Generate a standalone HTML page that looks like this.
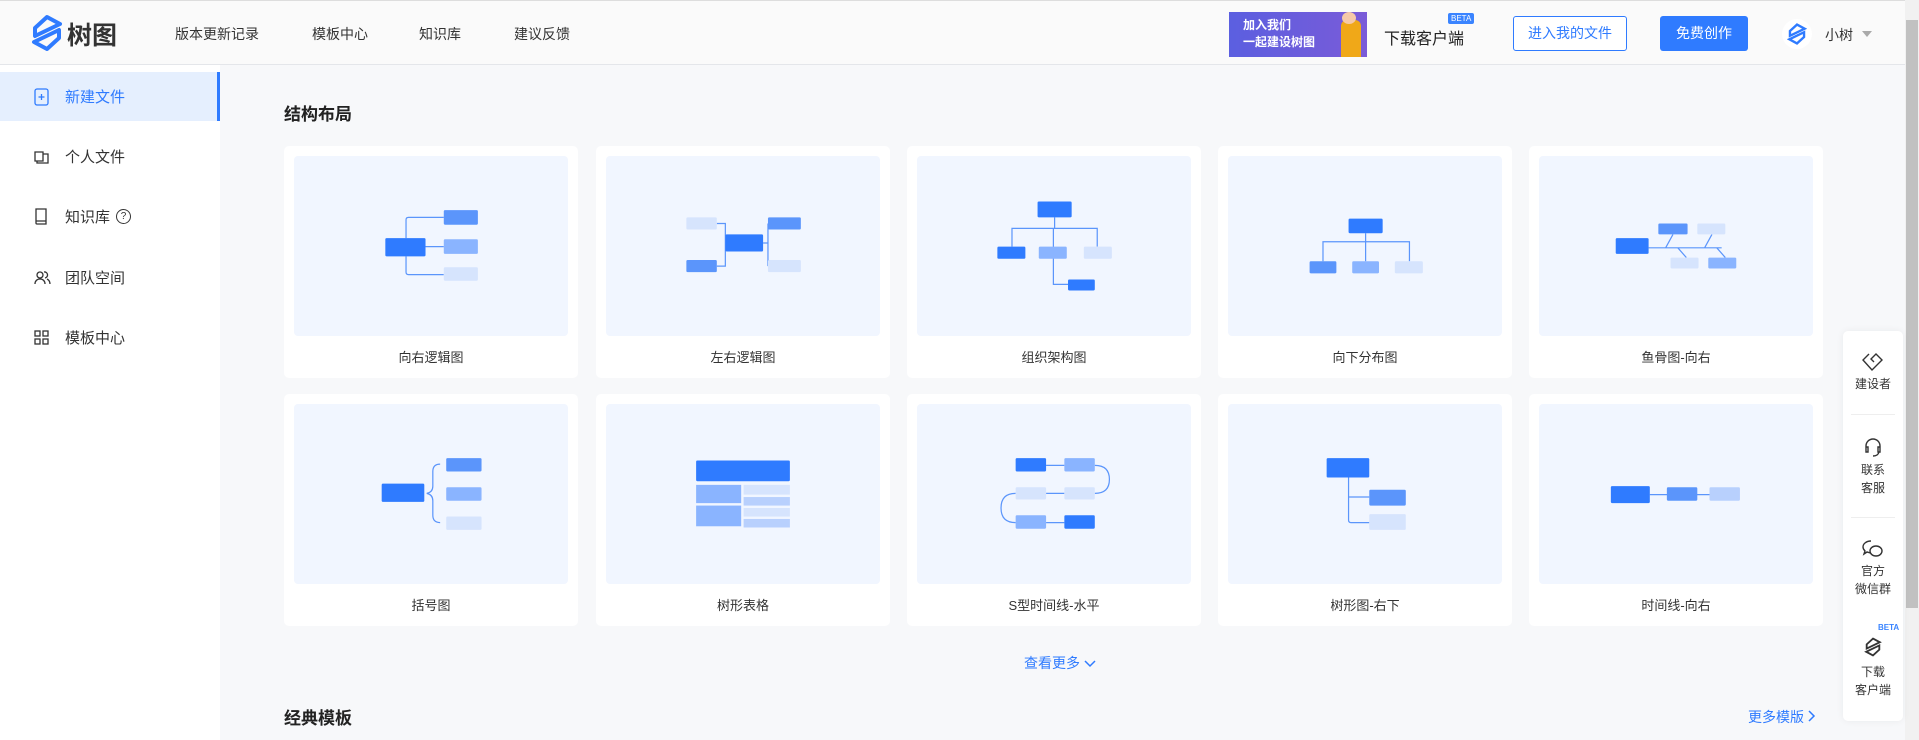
<!DOCTYPE html>
<html><head><meta charset="utf-8"><style>
*{margin:0;padding:0;box-sizing:border-box}
body{width:1919px;height:740px;overflow:hidden;background:#f7f8fa;font-family:"Liberation Sans","Noto Sans CJK SC",sans-serif;color:#333;position:relative}
.hdr{position:absolute;left:0;top:0;width:1905px;height:65px;background:#fafafa;border-bottom:1px solid #e4e6ea;border-top:1px solid #ddd}
.abs{position:absolute}
.nav{position:absolute;top:23px;font-size:14px;color:#333}
.side{position:absolute;left:0;top:65px;width:220px;height:675px;background:#fff}
.si{position:absolute;left:0;width:220px;height:49px;font-size:15px;color:#333;display:flex;align-items:center;padding-left:65px}
.si svg{position:absolute;left:34px}
.card{position:absolute;width:294px;height:232px;background:#fff;border-radius:5px}
.pv{position:absolute;left:10px;top:10px;width:274px;height:180px;background:#f1f6ff;border-radius:4px}
.pv svg{width:100%;height:100%}
.lb{position:absolute;left:0;right:0;top:201px;text-align:center;font-size:13px;color:#333}
.rp{position:absolute;left:1843px;top:331px;width:60px;height:390px;background:#fff;border-radius:5px;box-shadow:0 0 8px rgba(0,0,0,.06)}
.rt{position:absolute;left:0;width:60px;text-align:center;font-size:12px;color:#333;line-height:18px}
</style></head><body>
<div class="hdr">
 <svg class="abs" style="left:30px;top:13px" width="34" height="38" viewBox="0 0 34 38"><g fill="none" stroke="#2f7bff" stroke-width="4" stroke-linejoin="round"><path d="M17 3 L30 10 L5 22 L5 14 Z"/><path d="M17 35 L4 28 L29 16 L29 24 Z"/></g></svg>
 <div class="abs" style="left:67px;top:15px;font-size:25px;font-weight:bold;color:#333">树图</div>
 <div class="nav" style="left:175px">版本更新记录</div>
 <div class="nav" style="left:312px">模板中心</div>
 <div class="nav" style="left:419px">知识库</div>
 <div class="nav" style="left:514px">建议反馈</div>
 <div class="abs" style="left:1229px;top:11px;width:138px;height:45px;background:linear-gradient(90deg,#5b5fe0,#7a5bd8);color:#fff;font-size:12px;font-weight:bold;line-height:17px;padding:5px 0 0 14px;overflow:hidden">加入我们<br>一起建设树图<div class="abs" style="left:112px;top:8px;width:20px;height:40px;background:#f0a818;border-radius:6px 6px 0 0"></div><div class="abs" style="left:113px;top:0;width:14px;height:12px;background:#f6c9a8;border-radius:50%"></div></div>
 <div class="abs" style="left:1384px;top:24px;font-size:16px;color:#222">下载客户端</div>
 <div class="abs" style="left:1448px;top:12px;font-size:8px;color:#fff;background:#3a84ff;padding:1px 3px;border-radius:2px">BETA</div>
 <div class="abs" style="left:1513px;top:15px;width:114px;height:35px;border:1px solid #2f7bff;border-radius:3px;color:#2f7bff;font-size:14px;text-align:center;line-height:33px;background:#fff">进入我的文件</div>
 <div class="abs" style="left:1660px;top:15px;width:88px;height:35px;background:#2f7bff;border-radius:3px;color:#fff;font-size:14px;text-align:center;line-height:35px">免费创作</div>
 <div class="abs" style="left:1782px;top:18px;width:30px;height:30px;border-radius:50%;background:#fff"></div>
 <svg class="abs" style="left:1787px;top:21px" width="20" height="24" viewBox="0 0 34 38"><g fill="none" stroke="#2f7bff" stroke-width="4"><path d="M17 3 L30 10 L5 22 L5 14 Z"/><path d="M17 35 L4 28 L29 16 L29 24 Z"/></g></svg>
 <div class="abs" style="left:1825px;top:24px;font-size:14px">小树</div>
 <div class="abs" style="left:1862px;top:30px;border:5px solid transparent;border-top:6px solid #aaa"></div>
</div>
<div class="abs" style="left:1905px;top:0;width:14px;height:740px;background:#f1f1f1"></div>
<div class="abs" style="left:1906px;top:20px;width:12px;height:588px;background:#c1c1c1"></div>
<div class="side">
 <div class="si" style="top:7px;background:#e5effe;color:#2f7bff;border-right:3px solid #2f7bff"><svg width="16" height="18" viewBox="0 0 16 18" fill="none" stroke="#2f7bff" stroke-width="1.3"><rect x="1" y="1" width="13" height="16" rx="2"/><path d="M7.5 6v6M4.5 9h6"/></svg>新建文件</div>
 <div class="si" style="top:67px"><svg width="16" height="14" viewBox="0 0 16 14" fill="none" stroke="#333" stroke-width="1.3"><path d="M1 2h8v9H1z M3 11v2h11V4h-5"/></svg>个人文件</div>
 <div class="si" style="top:127px"><svg width="14" height="17" viewBox="0 0 14 17" fill="none" stroke="#333" stroke-width="1.3"><path d="M2 1h10v15H3a1 1 0 0 1-1-1z M2 13h10"/></svg>知识库 <span style="display:inline-block;width:15px;height:15px;border:1px solid #333;border-radius:50%;font-size:10px;text-align:center;line-height:13px;margin-left:6px">?</span></div>
 <div class="si" style="top:188px"><svg width="17" height="15" viewBox="0 0 17 15" fill="none" stroke="#333" stroke-width="1.3"><circle cx="6" cy="5" r="3"/><path d="M1 14c0-3 2-5 5-5s5 2 5 5M10 2a3 3 0 0 1 1 6M13 9c2 1 3 3 3 5"/></svg>团队空间</div>
 <div class="si" style="top:248px"><svg width="15" height="15" viewBox="0 0 15 15" fill="none" stroke="#333" stroke-width="1.3"><rect x="1" y="1" width="5" height="5"/><rect x="9" y="1" width="5" height="5"/><rect x="1" y="9" width="5" height="5"/><rect x="9" y="9" width="5" height="5"/></svg>模板中心</div>
</div>
<div class="abs" style="left:284px;top:100px;font-size:17px;font-weight:bold;color:#222">结构布局</div>

<div class="card" style="left:284px;top:146px"><div class="pv"><svg viewBox="0 0 225 147"><g fill="none" stroke="#5b95fb" stroke-width="1"><path d="M108 74H123M92 67V52q0-2 2-2H123M92 82V95q0 2 2 2H123"/></g><rect x="75" y="67" width="33" height="15" rx="1" fill="#2f7bff"/><rect x="123" y="44" width="28" height="12" rx="1" fill="#5b95fb"/><rect x="123" y="68" width="28" height="12" rx="1" fill="#8ab4ff"/><rect x="123" y="91" width="28" height="11" rx="1" fill="#d6e4fd"/></svg></div><div class="lb">向右逻辑图</div></div>
<div class="card" style="left:596px;top:146px"><div class="pv"><svg viewBox="0 0 225 147"><g fill="none" stroke="#5b95fb"><path d="M129 71h4M133 55v35M91 55h7v35h-7M98 71h0"/></g><rect x="98" y="64" width="31" height="14" rx="1" fill="#2f7bff"/><rect x="133" y="50" width="27" height="10" rx="1" fill="#5b95fb"/><rect x="133" y="85" width="27" height="10" rx="1" fill="#d6e4fd"/><rect x="66" y="50" width="25" height="10" rx="1" fill="#d6e4fd"/><rect x="66" y="85" width="25" height="10" rx="1" fill="#5b95fb"/></svg></div><div class="lb">左右逻辑图</div></div>
<div class="card" style="left:907px;top:146px"><div class="pv"><svg viewBox="0 0 225 147"><g fill="none" stroke="#5b95fb"><path d="M113 50v9M78 74V59h70v15M112 59v46h12"/></g><rect x="99" y="37" width="28" height="13" rx="1" fill="#2f7bff"/><rect x="66" y="74" width="23" height="10" rx="1" fill="#2f7bff"/><rect x="100" y="74" width="23" height="10" rx="1" fill="#8ab4ff"/><rect x="137" y="74" width="23" height="10" rx="1" fill="#d6e4fd"/><rect x="124" y="101" width="22" height="9" rx="1" fill="#2f7bff"/></svg></div><div class="lb">组织架构图</div></div>
<div class="card" style="left:1218px;top:146px"><div class="pv"><svg viewBox="0 0 225 147"><g fill="none" stroke="#5b95fb"><path d="M113 63v7M78 86V70h71v16M113 70v16"/></g><rect x="99" y="51" width="28" height="12" rx="1" fill="#2f7bff"/><rect x="67" y="86" width="22" height="10" rx="1" fill="#5b95fb"/><rect x="102" y="86" width="22" height="10" rx="1" fill="#8ab4ff"/><rect x="137" y="86" width="23" height="10" rx="1" fill="#d6e4fd"/></svg></div><div class="lb">向下分布图</div></div>
<div class="card" style="left:1529px;top:146px"><div class="pv"><svg viewBox="0 0 225 147"><g fill="none" stroke="#5b95fb"><path d="M90 75h60M104 75l6-11M136 75l6-11M114 75l7 8M146 75l7 8"/></g><rect x="63" y="67" width="27" height="13" rx="1" fill="#2f7bff"/><rect x="98" y="55" width="24" height="9" rx="1" fill="#5b95fb"/><rect x="130" y="55" width="23" height="9" rx="1" fill="#d6e4fd"/><rect x="108" y="83" width="23" height="9" rx="1" fill="#d6e4fd"/><rect x="139" y="83" width="23" height="9" rx="1" fill="#8ab4ff"/></svg></div><div class="lb">鱼骨图-向右</div></div>

<div class="card" style="left:284px;top:394px"><div class="pv"><svg viewBox="0 0 225 147"><path d="M120 49q-6 0-6 6v12q0 5-5 6q5 1 5 6v12q0 6 6 6" fill="none" stroke="#5b95fb"/><rect x="72" y="65" width="35" height="15" rx="1" fill="#2f7bff"/><rect x="125" y="44" width="29" height="11" rx="1" fill="#5b95fb"/><rect x="125" y="68" width="29" height="11" rx="1" fill="#8ab4ff"/><rect x="125" y="92" width="29" height="11" rx="1" fill="#d6e4fd"/></svg></div><div class="lb">括号图</div></div>
<div class="card" style="left:596px;top:394px"><div class="pv"><svg viewBox="0 0 225 147"><rect x="74" y="46" width="77" height="17" rx="1" fill="#2f7bff"/><rect x="74" y="66" width="37" height="15" fill="#8ab4ff"/><rect x="74" y="83" width="37" height="17" fill="#8ab4ff"/><rect x="113" y="66" width="38" height="8" fill="#d6e4fd"/><rect x="113" y="76" width="38" height="7" fill="#b8d0fd"/><rect x="113" y="85" width="38" height="7" fill="#d6e4fd"/><rect x="113" y="94" width="38" height="7" fill="#b8d0fd"/></svg></div><div class="lb">树形表格</div></div>
<div class="card" style="left:907px;top:394px"><div class="pv"><svg viewBox="0 0 225 147"><g fill="none" stroke="#5b95fb"><path d="M106 50h15M106 73h15M106 97h15M146 50q12 0 12 11.5q0 11.5-12 11.5M81 73q-12 0-12 12q0 12 12 12"/></g><rect x="81" y="44" width="25" height="11" rx="1" fill="#2f7bff"/><rect x="121" y="44" width="25" height="11" rx="1" fill="#8ab4ff"/><rect x="81" y="68" width="25" height="10" rx="1" fill="#d6e4fd"/><rect x="121" y="68" width="25" height="10" rx="1" fill="#d6e4fd"/><rect x="81" y="91" width="25" height="11" rx="1" fill="#8ab4ff"/><rect x="121" y="91" width="25" height="11" rx="1" fill="#2f7bff"/></svg></div><div class="lb">S型时间线-水平</div></div>
<div class="card" style="left:1218px;top:394px"><div class="pv"><svg viewBox="0 0 225 147"><path d="M99 60v35q0 2 2 2h15M99 76h17" fill="none" stroke="#5b95fb"/><rect x="81" y="44" width="35" height="16" rx="1" fill="#2f7bff"/><rect x="116" y="70" width="30" height="13" rx="1" fill="#5b95fb"/><rect x="116" y="90" width="30" height="13" rx="1" fill="#d6e4fd"/></svg></div><div class="lb">树形图-右下</div></div>
<div class="card" style="left:1529px;top:394px"><div class="pv"><svg viewBox="0 0 225 147"><path d="M91 74h49" stroke="#5b95fb"/><rect x="59" y="67" width="32" height="14" rx="1" fill="#2f7bff"/><rect x="105" y="68" width="25" height="11" rx="1" fill="#5b95fb"/><rect x="140" y="68" width="25" height="11" rx="1" fill="#b8d0fd"/></svg></div><div class="lb">时间线-向右</div></div>

<div class="abs" style="left:1024px;top:653px;font-size:14px;color:#2f7bff">查看更多 <svg width="12" height="8" viewBox="0 0 12 8"><path d="M1 1l5 5 5-5" fill="none" stroke="#2f7bff" stroke-width="1.5"/></svg></div>
<div class="abs" style="left:284px;top:704px;font-size:17px;font-weight:bold;color:#222">经典模板</div>
<div class="abs" style="left:1748px;top:707px;font-size:14px;color:#2f7bff">更多模版 <svg width="8" height="12" viewBox="0 0 8 12"><path d="M1 1l5 5-5 5" fill="none" stroke="#2f7bff" stroke-width="1.5"/></svg></div>

<div class="rp">
 <svg class="abs" style="left:19px;top:21px" width="22" height="20" viewBox="0 0 22 20" fill="none" stroke="#333" stroke-width="1.4"><path d="M7 2L1 8l9 10 10-10-6-6-5 5 3 3"/></svg>
 <div class="rt" style="top:44px">建设者</div>
 <div class="abs" style="left:8px;top:83px;width:44px;height:1px;background:#eee"></div>
 <svg class="abs" style="left:20px;top:106px" width="20" height="20" viewBox="0 0 20 20" fill="none" stroke="#333" stroke-width="1.4"><path d="M3 12V9a7 7 0 0 1 14 0v3M3 10h2v5H3zM15 10h2v5h-2zM16 15q-1 4-6 4"/></svg>
 <div class="rt" style="top:130px">联系<br>客服</div>
 <div class="abs" style="left:8px;top:186px;width:44px;height:1px;background:#eee"></div>
 <svg class="abs" style="left:19px;top:208px" width="22" height="20" viewBox="0 0 22 20" fill="none" stroke="#333" stroke-width="1.4"><path d="M9 2C4 2 1 5 1 8c0 2 1 3 2 4l-1 3 3-2c1 0 2 1 4 1"/><ellipse cx="14" cy="12" rx="6" ry="5"/></svg>
 <div class="rt" style="top:231px">官方<br>微信群</div>
 <div class="abs" style="left:35px;top:292px;font-size:8px;color:#3a84ff;font-weight:bold">BETA</div>
 <svg class="abs" style="left:21px;top:306px" width="18" height="20" viewBox="0 0 34 38"><g fill="none" stroke="#333" stroke-width="3.5"><path d="M17 3 L30 10 L5 22 L5 14 Z"/><path d="M17 35 L4 28 L29 16 L29 24 Z"/></g></svg>
 <div class="rt" style="top:332px">下载<br>客户端</div>
</div>
</body></html>
